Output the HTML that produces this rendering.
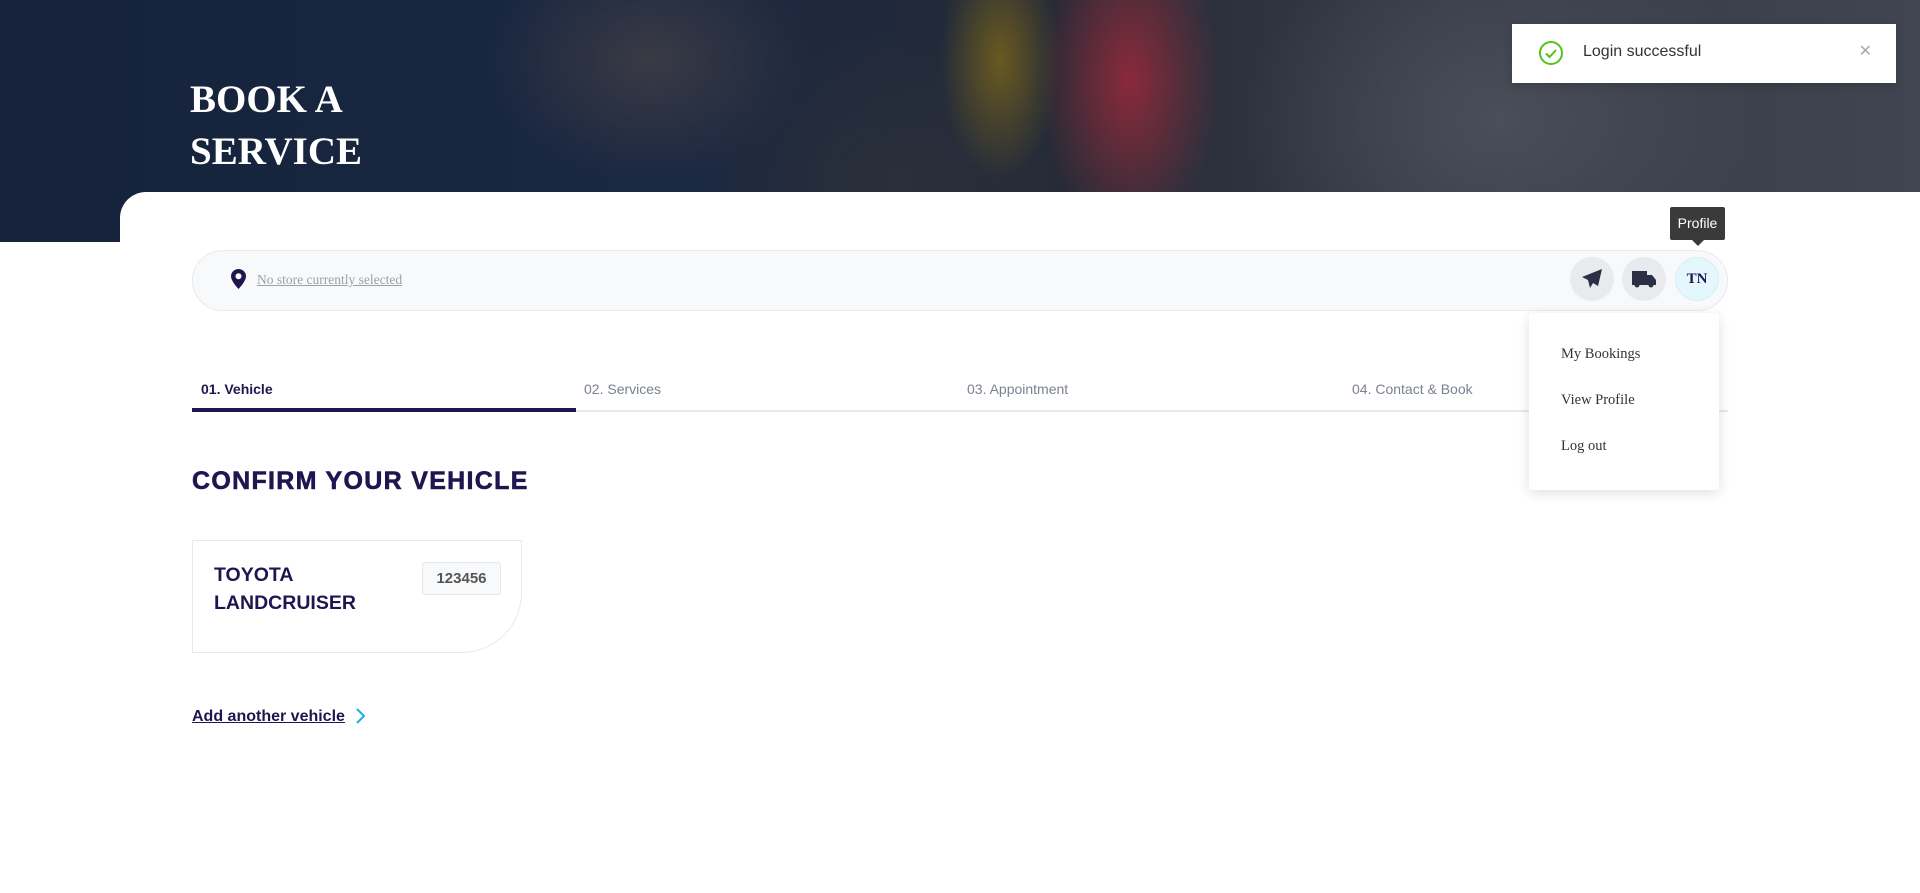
<!DOCTYPE html>
<html><head><meta charset="utf-8"><style>
*{box-sizing:border-box;margin:0;padding:0}
body{width:1920px;height:893px;background:#fff;position:relative;overflow:hidden;font-family:"Liberation Sans",Arial,sans-serif}
.hero{position:absolute;left:0;top:0;width:1920px;height:242px;
background:
radial-gradient(ellipse 90px 160px at 1130px 80px,#8a2a3a 0%,rgba(138,42,58,0) 100%),
radial-gradient(ellipse 60px 120px at 1000px 60px,#6a5a20 0%,rgba(106,90,32,0) 100%),
radial-gradient(ellipse 260px 200px at 1500px 120px,#4a4e58 0%,rgba(74,78,88,0) 100%),
radial-gradient(ellipse 200px 150px at 900px 180px,#2a2f3a 0%,rgba(42,47,58,0) 100%),
radial-gradient(ellipse 160px 120px at 650px 60px,#3a3a44 0%,rgba(58,58,68,0) 100%),
linear-gradient(90deg,#15223a 0%,#1a2842 35%,#252a36 55%,#353a46 75%,#404550 100%)}
.panel{position:absolute;left:120px;top:192px;width:1800px;height:701px;background:#fff;border-top-left-radius:26px}
.title{position:absolute;left:190px;top:74px;color:#fff;font-family:"Liberation Serif",serif;font-weight:bold;font-size:39px;line-height:52px}
.toast{position:absolute;left:1512px;top:24px;width:384px;height:59px;background:#fff;box-shadow:0 3px 8px rgba(0,0,0,.15);z-index:5}
.toast .msg{position:absolute;left:71px;top:19px;font-size:16px;color:#333}
.toast .x{position:absolute;right:24px;top:17px;font-size:16px;color:#aaa}
.bar{position:absolute;left:192px;top:250px;width:1536px;height:61px;border:1px solid #e9eaec;border-radius:31px;background:#f8f9fa}
.store{position:absolute;left:257px;top:272px;font-family:"Liberation Serif",serif;font-size:13.5px;color:#9aa0ac;text-decoration:underline}
.cb{position:absolute;top:257px;width:44px;height:44px;border-radius:50%;background:#e9eaee}
.tip{position:absolute;left:1670px;top:207px;width:55px;height:33px;background:#3a3a3a;border-radius:2px;color:#fff;font-size:14px;text-align:center;line-height:33px}
.tip:after{content:"";position:absolute;left:22px;bottom:-6px;border:6px solid transparent;border-bottom:0;border-top-color:#3a3a3a}
.dd{position:absolute;left:1529px;top:313px;width:190px;height:177px;background:#fff;border-radius:3px;box-shadow:0 3px 12px rgba(0,0,0,.13);z-index:5}
.dd div{position:absolute;left:32px;font-family:"Liberation Serif",serif;font-size:14.5px;color:#333}
.tab{position:absolute;top:381px;font-size:14px;color:#7a8190}
.line{position:absolute;left:192px;top:410px;width:1536px;height:2px;background:#e8e9ec}
.act{position:absolute;left:192px;top:408px;width:384px;height:4px;background:#1f1650}
h2{position:absolute;left:192px;top:467px;font-size:25px;font-weight:900;color:#1f1650;letter-spacing:1.3px;-webkit-text-stroke:.6px #1f1650}
.card{position:absolute;left:192px;top:540px;width:330px;height:113px;border:1px solid #e8e9ec;border-bottom-right-radius:60px}
.card .n{position:absolute;left:21px;top:20px;font-size:19.5px;font-weight:bold;color:#1f1650;line-height:28px}
.badge{position:absolute;left:229px;top:21px;width:79px;height:33px;border:1px solid #e6e7ea;border-radius:3px;background:#f8f9fa;font-size:15px;font-weight:bold;color:#555;text-align:center;line-height:31px}
.add{position:absolute;left:192px;top:708px;font-size:16px;font-weight:bold;color:#1f1650;text-decoration:underline}
</style></head><body>
<div class="hero"></div>
<div class="title">BOOK A<br>SERVICE</div>
<div class="panel"></div>
<div class="toast">
<svg style="position:absolute;left:26px;top:16px" width="26" height="26" viewBox="0 0 26 26"><circle cx="13" cy="13" r="11" fill="none" stroke="#52c41a" stroke-width="2"/><path d="M8 13.5l3.5 3.5 6.5-7" fill="none" stroke="#52c41a" stroke-width="2"/></svg>
<div class="msg">Login successful</div><div class="x">✕</div></div>
<div class="bar"></div>
<svg style="position:absolute;left:230px;top:268px" width="17" height="22" viewBox="0 0 17 22"><path d="M8.5 1C4.4 1 1 4.2 1 8.3 1 13.5 8.5 21 8.5 21S16 13.5 16 8.3C16 4.2 12.6 1 8.5 1z" fill="#1f1650"/><circle cx="8.5" cy="8.3" r="3" fill="#fff"/></svg>
<div class="store">No store currently selected</div>
<div class="cb" style="left:1570px"><svg style="position:absolute;left:11px;top:11px" width="22" height="22" viewBox="0 0 22 22"><path d="M21 1L1 9l6 3 2 8 3-5 5 3z" fill="#2a2f45"/></svg></div>
<div class="cb" style="left:1622px"><svg style="position:absolute;left:9px;top:12px" width="26" height="20" viewBox="0 0 26 20"><path d="M1 2h15v4h5l4 5v5H1z" fill="#2a2f45"/><circle cx="6" cy="16" r="2.5" fill="#2a2f45"/><circle cx="20" cy="16" r="2.5" fill="#2a2f45"/></svg></div>
<div class="cb" style="left:1675px;background:#e3f7fd;border:1px solid #d8eef5;font-family:'Liberation Serif',serif;font-weight:bold;font-size:15px;color:#1f1650;text-align:center;line-height:42px">TN</div>
<div class="tip">Profile</div>
<div class="line"></div><div class="act"></div>
<div class="dd"><div style="top:33px">My Bookings</div><div style="top:79px">View Profile</div><div style="top:125px">Log out</div></div>
<div class="tab" style="left:201px;color:#1f1650;font-weight:bold">01. Vehicle</div>
<div class="tab" style="left:584px">02. Services</div>
<div class="tab" style="left:967px">03. Appointment</div>
<div class="tab" style="left:1352px">04. Contact &amp; Book</div>
<h2>CONFIRM YOUR VEHICLE</h2>
<div class="card"><div class="n">TOYOTA<br>LANDCRUISER</div><div class="badge">123456</div></div>
<div class="add">Add another vehicle</div>
<svg style="position:absolute;left:355px;top:707px" width="12" height="18" viewBox="0 0 12 18"><path d="M2 2l7 7-7 7" fill="none" stroke="#1ab0e0" stroke-width="2"/></svg>
</body></html>
